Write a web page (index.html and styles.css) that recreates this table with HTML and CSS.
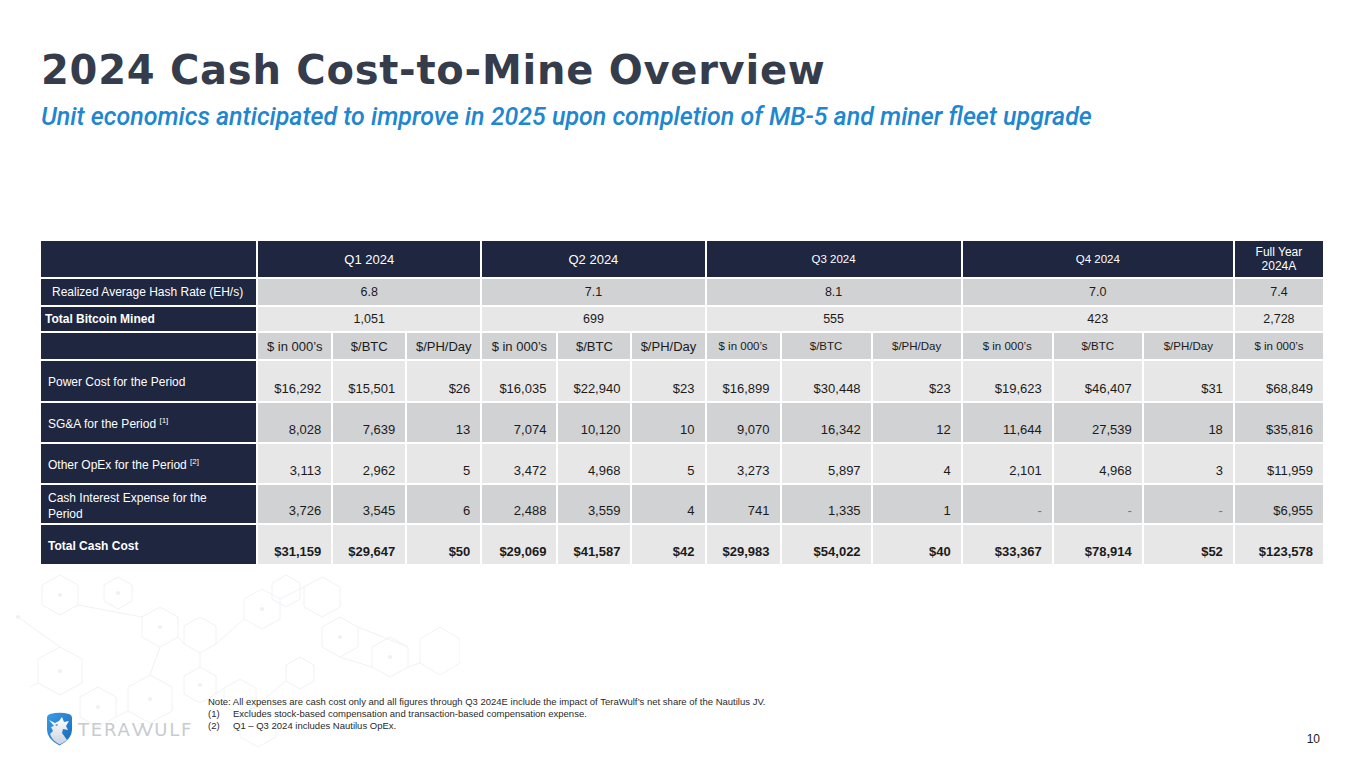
FILE: index.html
```html
<!DOCTYPE html>
<html lang="en">
<head>
<meta charset="utf-8">
<title>2024 Cash Cost-to-Mine Overview</title>
<link rel="stylesheet" href="styles.css">
</head>
<body>
<div class="slide">
  <svg class="bg-pattern" width="460" height="200" viewBox="0 0 460 200" aria-hidden="true">
    <g fill="none" stroke="#f0f2f5" stroke-width="1">
      <polygon points="60,8 78,18 78,38 60,48 42,38 42,18"/>
      <polygon points="118,10 132,18 132,34 118,42 104,34 104,18"/>
      <polygon points="160,40 178,50 178,70 160,80 142,70 142,50"/>
      <polygon points="60,80 82,92 82,116 60,128 38,116 38,92"/>
      <polygon points="98,120 116,130 116,150 98,160 80,150 80,130"/>
      <polygon points="150,108 172,120 172,144 150,156 128,144 128,120"/>
      <polygon points="200,50 216,59 216,77 200,86 184,77 184,59"/>
      <polygon points="262,22 280,32 280,52 262,62 244,52 244,32"/>
      <polygon points="200,100 216,109 216,127 200,136 184,127 184,109"/>
      <polygon points="240,112 256,121 256,139 240,148 224,139 224,121"/>
      <polygon points="286,8 300,16 300,32 286,40 272,32 272,16"/>
      <polygon points="258,140 276,150 276,170 258,180 240,170 240,150"/>
      <polygon points="340,50 358,60 358,80 340,90 322,80 322,60"/>
      <polygon points="390,70 408,80 408,100 390,110 372,100 372,80"/>
      <polygon points="322,10 340,20 340,40 322,50 304,40 304,20"/>
      <polygon points="300,90 314,98 314,114 300,122 286,114 286,98"/>
      <polygon points="440,60 460,72 460,96 440,108 420,96 420,72"/>
      <line x1="18" y1="50" x2="60" y2="80"/>
      <line x1="78" y1="38" x2="142" y2="50"/>
      <line x1="178" y1="70" x2="184" y2="77"/>
      <line x1="116" y1="150" x2="128" y2="144"/>
      <line x1="216" y1="77" x2="244" y2="52"/>
      <line x1="216" y1="127" x2="224" y2="121"/>
      <line x1="256" y1="139" x2="286" y2="114"/>
      <line x1="280" y1="32" x2="304" y2="20"/>
      <line x1="340" y1="90" x2="372" y2="100"/>
      <line x1="358" y1="60" x2="408" y2="80"/>
      <line x1="408" y1="100" x2="420" y2="96"/>
      <line x1="30" y1="120" x2="38" y2="116"/>
      <line x1="160" y1="80" x2="150" y2="108"/>
      <line x1="200" y1="86" x2="200" y2="100"/>
    </g>
    <g fill="#eef0f3">
      <circle cx="60" cy="28" r="2"/>
      <circle cx="118" cy="26" r="2"/>
      <circle cx="160" cy="60" r="2"/>
      <circle cx="60" cy="104" r="2"/>
      <circle cx="150" cy="132" r="2"/>
      <circle cx="262" cy="42" r="2"/>
      <circle cx="200" cy="118" r="2"/>
      <circle cx="340" cy="70" r="2"/>
      <circle cx="258" cy="160" r="2"/>
      <circle cx="390" cy="90" r="2"/>
      <circle cx="18" cy="50" r="2"/>
      <circle cx="98" cy="140" r="2"/>
    </g>
  </svg>

  <header class="head">
    <h1 class="title">2024 Cash Cost-to-Mine Overview</h1>
    <p class="subtitle">Unit economics anticipated to improve in 2025 upon completion of MB-5 and miner fleet upgrade</p>
  </header>

  <main class="table-wrap">
    <table class="cost">
      <colgroup>
        <col class="c-label">
        <col class="c-73"><col class="c-72"><col class="c-73">
        <col class="c-74"><col class="c-72"><col class="c-72">
        <col class="c-73"><col class="c-89"><col class="c-88">
        <col class="c-89"><col class="c-88"><col class="c-89">
        <col class="c-88">
      </colgroup>
      <tr class="r-head">
        <th class="lbl"></th>
        <th colspan="3" class="qh">Q1 2024</th>
        <th colspan="3" class="qh">Q2 2024</th>
        <th colspan="3" class="qh sm">Q3 2024</th>
        <th colspan="3" class="qh sm">Q4 2024</th>
        <th class="qh fy">Full Year<br>2024A</th>
      </tr>
      <tr class="r-hash dark">
        <th class="lbl hash">Realized Average Hash Rate (EH/s)</th>
        <td colspan="3" class="ctr">6.8</td>
        <td colspan="3" class="ctr">7.1</td>
        <td colspan="3" class="ctr">8.1</td>
        <td colspan="3" class="ctr">7.0</td>
        <td class="ctr">7.4</td>
      </tr>
      <tr class="r-btc light">
        <th class="lbl bold">Total Bitcoin Mined</th>
        <td colspan="3" class="ctr">1,051</td>
        <td colspan="3" class="ctr">699</td>
        <td colspan="3" class="ctr">555</td>
        <td colspan="3" class="ctr">423</td>
        <td class="ctr">2,728</td>
      </tr>
      <tr class="r-sub dark">
        <th class="lbl"></th>
        <td class="ctr">$ in 000’s</td><td class="ctr">$/BTC</td><td class="ctr">$/PH/Day</td>
        <td class="ctr">$ in 000’s</td><td class="ctr">$/BTC</td><td class="ctr">$/PH/Day</td>
        <td class="ctr sm">$ in 000’s</td><td class="ctr sm">$/BTC</td><td class="ctr sm">$/PH/Day</td>
        <td class="ctr sm">$ in 000’s</td><td class="ctr sm">$/BTC</td><td class="ctr sm">$/PH/Day</td>
        <td class="ctr sm">$ in 000’s</td>
      </tr>
      <tr class="r-power light">
        <th class="lbl item">Power Cost for the Period</th>
        <td>$16,292</td><td>$15,501</td><td>$26</td>
        <td>$16,035</td><td>$22,940</td><td>$23</td>
        <td>$16,899</td><td>$30,448</td><td>$23</td>
        <td>$19,623</td><td>$46,407</td><td>$31</td>
        <td>$68,849</td>
      </tr>
      <tr class="r-sga dark">
        <th class="lbl item">SG&amp;A for the Period <sup>[1]</sup></th>
        <td>8,028</td><td>7,639</td><td>13</td>
        <td>7,074</td><td>10,120</td><td>10</td>
        <td>9,070</td><td>16,342</td><td>12</td>
        <td>11,644</td><td>27,539</td><td>18</td>
        <td>$35,816</td>
      </tr>
      <tr class="r-other light">
        <th class="lbl item">Other OpEx for the Period <sup>[2]</sup></th>
        <td>3,113</td><td>2,962</td><td>5</td>
        <td>3,472</td><td>4,968</td><td>5</td>
        <td>3,273</td><td>5,897</td><td>4</td>
        <td>2,101</td><td>4,968</td><td>3</td>
        <td>$11,959</td>
      </tr>
      <tr class="r-cash dark">
        <th class="lbl item">Cash Interest Expense for the Period</th>
        <td>3,726</td><td>3,545</td><td>6</td>
        <td>2,488</td><td>3,559</td><td>4</td>
        <td>741</td><td>1,335</td><td>1</td>
        <td class="dash">-</td><td class="dash">-</td><td class="dash">-</td>
        <td>$6,955</td>
      </tr>
      <tr class="r-total light">
        <th class="lbl item bold">Total Cash Cost</th>
        <td>$31,159</td><td>$29,647</td><td>$50</td>
        <td>$29,069</td><td>$41,587</td><td>$42</td>
        <td>$29,983</td><td>$54,022</td><td>$40</td>
        <td>$33,367</td><td>$78,914</td><td>$52</td>
        <td>$123,578</td>
      </tr>
    </table>
  </main>

  <footer class="foot">
    <div class="logo">
      <svg class="shield" width="27" height="34" viewBox="0 0 27 34" aria-hidden="true">
        <defs>
          <linearGradient id="sg" x1="0" y1="0" x2="1" y2="1">
            <stop offset="0" stop-color="#3b9be6"/>
            <stop offset="1" stop-color="#1769b8"/>
          </linearGradient>
          <linearGradient id="wg" x1="0" y1="0" x2="0" y2="1">
            <stop offset="0" stop-color="#ffffff"/>
            <stop offset="1" stop-color="#c9d3de"/>
          </linearGradient>
        </defs>
        <path d="M4 2 Q13.5 -0.5 23 2 Q26 3 26 6 L26 18 Q26 27 13.5 33.5 Q1 27 1 18 L1 6 Q1 3 4 2 Z" fill="url(#sg)"/>
        <path d="M3 8 L9 11 L13 9 L16 5 L18 10 L23 9 L20 14 L22 18 L17 17 L16 21 L21 28 Q17 31 13.5 32.5 Q6 28.5 4 22 L7 19 L5 15 L8 14 Z" fill="url(#wg)"/>
        <path d="M9 13 L12 12 L11 14 Z" fill="#2a7fcf"/>
      </svg>
      <span class="logo-text">TERA<span class="vv">VV</span>ULF</span>
    </div>
    <div class="notes">
      <p>Note: All expenses are cash cost only and all figures through Q3 2024E include the impact of TeraWulf’s net share of the Nautilus JV.</p>
      <p><span class="fn">(1)</span>Excludes stock-based compensation and transaction-based compensation expense.</p>
      <p><span class="fn">(2)</span>Q1 – Q3 2024 includes Nautilus OpEx.</p>
    </div>
    <div class="page-num">10</div>
  </footer>
</div>
</body>
</html>
```

FILE: styles.css
```css
* { box-sizing: border-box; }

html, body {
  margin: 0;
  padding: 0;
  background: #ffffff;
}

.slide {
  position: relative;
  width: 1365px;
  height: 768px;
  overflow: hidden;
  display: flex;
  flex-direction: column;
  font-family: "Liberation Sans", Arial, sans-serif;
  color: #1b1b1b;
}

.bg-pattern {
  position: absolute;
  left: 0;
  top: 567px;
  z-index: 0;
}

.head {
  position: relative;
  z-index: 1;
  padding: 47px 0 0 41px;
}

.title {
  margin: 0;
  font-family: "DejaVu Sans", sans-serif;
  font-weight: bold;
  font-size: 40px;
  line-height: 46px;
  letter-spacing: 0.75px;
  color: #353c4b;
}

.subtitle {
  margin: 10px 0 0 0;
  font-family: Roboto, "Liberation Sans", sans-serif;
  font-style: italic;
  font-weight: 500;
  font-size: 25px;
  line-height: 28px;
  color: #2186d0;
}

.table-wrap {
  position: relative;
  z-index: 1;
  padding: 0 0 0 39px;
  margin-top: 108px;
}

.cost {
  border-collapse: separate;
  border-spacing: 2px;
  table-layout: fixed;
  width: 1286px;
  font-size: 13px;
}

.c-label { width: 215px; }
.c-72 { width: 72px; }
.c-73 { width: 73px; }
.c-74 { width: 74px; }
.c-88 { width: 88px; }
.c-89 { width: 89px; }

.cost th, .cost td {
  padding: 0;
  font-weight: normal;
}

.cost td {
  text-align: right;
  vertical-align: bottom;
  padding: 0 10px 5px 0;
  white-space: nowrap;
}

.cost .lbl {
  background: #1e2640;
  color: #ffffff;
  text-align: left;
  font-size: 12px;
  line-height: 15px;
}

.cost .lbl.bold { font-weight: bold; padding-left: 4px; }
.cost .lbl.hash { padding-left: 11px; }
.cost .lbl.item {
  vertical-align: top;
  padding: 14px 40px 0 7px;
}
.cost .r-cash .lbl.item { padding-top: 5px; line-height: 16px; }

.cost sup {
  font-size: 8px;
  vertical-align: 5px;
  line-height: 0;
}

.r-head { height: 36px; }
.r-hash { height: 26px; }
.r-btc { height: 24px; }
.r-sub { height: 26px; }
.r-power { height: 40px; }
.r-sga { height: 39px; }
.r-other { height: 39px; }
.r-cash { height: 38px; }
.r-total { height: 39px; }

.qh {
  background: #1e2640;
  color: #ffffff;
  font-size: 13px;
  text-align: center;
  vertical-align: middle;
}
.qh.sm { font-size: 11.5px; }
.qh.fy { font-size: 12px; line-height: 14px; font-weight: normal; }

.dark td { background: #d1d2d3; }
.light td { background: #e7e7e7; }

.cost td.ctr {
  text-align: center;
  vertical-align: middle;
  padding: 0;
}
.r-sub td.ctr { font-size: 13px; }
.r-sub td.ctr.sm { font-size: 11.5px; }
.r-hash td, .r-btc td { font-size: 12.5px; }

.r-total td { font-weight: bold; }
.r-total .lbl { font-weight: bold; }

.cost td.dash { color: #777; }

.foot {
  position: relative;
  z-index: 1;
  margin-top: auto;
  display: flex;
  align-items: flex-start;
  padding: 0 45px 22px 46px;
  height: 72px;
}

.logo {
  display: flex;
  align-items: center;
  gap: 5px;
  margin-top: 16px;
  width: 162px;
}

.shield { flex: none; }

.logo-text {
  font-family: "DejaVu Sans", sans-serif;
  font-size: 18px;
  letter-spacing: 1.8px;
  color: #c7cbd1;
}
.logo-text .vv { letter-spacing: -3px; margin-right: 4px; }

.notes {
  font-size: 9.5px;
  line-height: 12px;
  color: #2a2a2a;
  margin-top: 0;
}
.notes p { margin: 0; }
.notes .fn { display: inline-block; width: 25px; }

.page-num {
  margin-left: auto;
  align-self: flex-end;
  font-size: 12px;
  color: #222;
}
```
